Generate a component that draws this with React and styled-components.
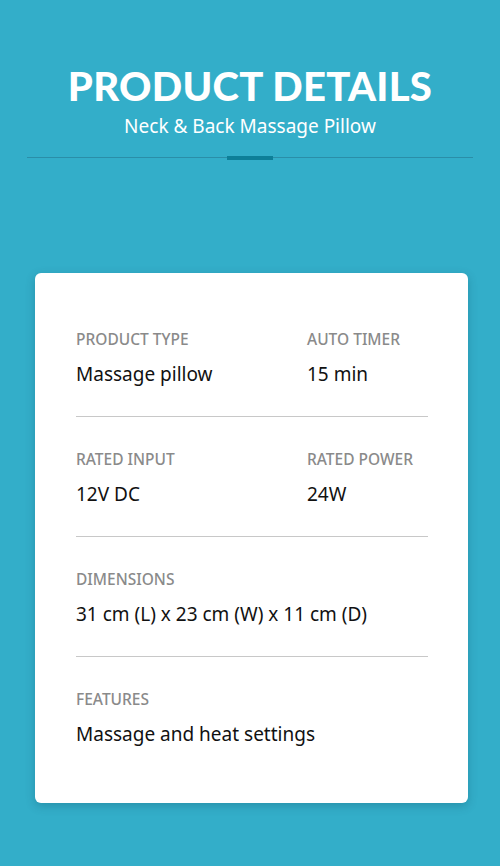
import React from 'react'
import styled, { createGlobalStyle } from 'styled-components'

const Global = createGlobalStyle`
  html, body {
    margin: 0;
    padding: 0;
    background: #33aec9;
  }
  body {
    font-family: 'Lato', 'Noto Sans', sans-serif;
  }
`

const Page = styled.div`
  width: 500px;
  min-height: 866px;
  background: #33aec9;
  padding-top: 62px;
  box-sizing: border-box;
`

const Header = styled.header`
  display: flex;
  flex-direction: column;
  align-items: center;
`

const Title = styled.h1`
  margin: 0;
  color: #fff;
  font-family: 'Lato', sans-serif;
  font-weight: 900;
  font-size: 40px;
  line-height: 48px;
  letter-spacing: 0.3px;
`

const Subtitle = styled.p`
  margin: 4px 0 0;
  color: #fff;
  font-family: 'Noto Sans', sans-serif;
  font-size: 19px;
  line-height: 24px;
`

const Divider = styled.div`
  position: relative;
  width: 446px;
  margin: 19px auto 0;
  height: 1px;
  background: #2a8ea8;
  &::after {
    content: '';
    position: absolute;
    left: 200px;
    top: -1px;
    width: 46px;
    height: 4px;
    background: #0d7f98;
  }
`

const Card = styled.section`
  width: 433px;
  margin: 115px 0 0 35px;
  background: #fff;
  border-radius: 6px;
  box-shadow: 0 3px 10px rgba(0, 60, 80, 0.25);
  padding: 24px 40px 27px 41px;
  box-sizing: border-box;
`

const Row = styled.div`
  display: grid;
  grid-template-columns: ${({ $cols }) => ($cols === 2 ? '231px 1fr' : '1fr')};
  padding: 32px 0 29px;
  border-bottom: ${({ $last }) => ($last ? 'none' : '1px solid #c8c8c8')};
`

const Field = styled.div`
  display: flex;
  flex-direction: column;
  gap: 12px;
`

const Label = styled.span`
  font-family: 'Noto Sans', sans-serif;
  font-size: 15.5px;
  line-height: 20px;
  color: #8a8a8a;
  font-weight: 500;
`

const Value = styled.span`
  font-family: 'Noto Sans', sans-serif;
  font-size: 19px;
  line-height: 26px;
  color: #111;
`

const rows = [
  [
    ['PRODUCT TYPE', 'Massage pillow'],
    ['AUTO TIMER', '15 min'],
  ],
  [
    ['RATED INPUT', '12V DC'],
    ['RATED POWER', '24W'],
  ],
  [['DIMENSIONS', '31 cm (L) x 23 cm (W) x 11 cm (D)']],
  [['FEATURES', 'Massage and heat settings']],
]

export default function App() {
  return (
    <>
      <Global />
      <Page>
        <Header>
          <Title>PRODUCT DETAILS</Title>
          <Subtitle>Neck &amp; Back Massage Pillow</Subtitle>
        </Header>
        <Divider />
        <Card>
          {rows.map((r, i) => (
            <Row key={i} $cols={r.length} $last={i === rows.length - 1}>
              {r.map(([label, value]) => (
                <Field key={label}>
                  <Label>{label}</Label>
                  <Value>{value}</Value>
                </Field>
              ))}
            </Row>
          ))}
        </Card>
      </Page>
    </>
  )
}
